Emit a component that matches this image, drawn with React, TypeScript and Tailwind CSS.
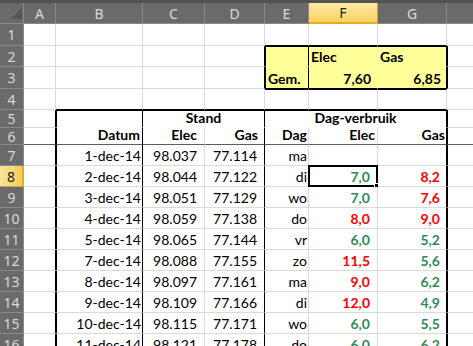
import React from 'react';

type Edge = 'g' | 'k' | 'n' | 'y' | 'f';
type Cell = {
  c: number;
  span?: number;
  text?: string;
  align?: 'l' | 'r' | 'c';
  bold?: boolean;
  color?: 'r' | 'g';
  pr?: number;
};

const LETTERS = ['A', 'B', 'C', 'D', 'E', 'F', 'G', ''];

const RIGHT: Record<Edge, string> = {
  g: 'border-r-[#dadada]',
  k: 'border-r-black',
  n: 'border-r-white',
  y: 'border-r-[#ffff99]',
  f: 'border-r-[#5e5e5e]',
};
const BOTTOM: Record<Edge, string> = {
  g: 'border-b-[#dadada]',
  k: 'border-b-black',
  n: 'border-b-white',
  y: 'border-b-[#ffff99]',
  f: 'border-b-[#5e5e5e]',
};
const PAD: Record<number, string> = {
  1: 'pr-[1px]',
  2: 'pr-[2px]',
  5: 'pr-[5px]',
  6: 'pr-[6px]',
  7: 'pr-[7px]',
};

// stand + dagverbruik, rows 7..16
const DATA: [string, string, string, string, string, string][] = [
  ['1-dec-14', '98.037', '77.114', 'ma', '', ''],
  ['2-dec-14', '98.044', '77.122', 'di', '7,0g', '8,2r'],
  ['3-dec-14', '98.051', '77.129', 'wo', '7,0g', '7,6r'],
  ['4-dec-14', '98.059', '77.138', 'do', '8,0r', '9,0r'],
  ['5-dec-14', '98.065', '77.144', 'vr', '6,0g', '5,2g'],
  ['7-dec-14', '98.088', '77.155', 'zo', '11,5r', '5,6g'],
  ['8-dec-14', '98.097', '77.161', 'ma', '9,0r', '6,2g'],
  ['9-dec-14', '98.109', '77.166', 'di', '12,0r', '4,9g'],
  ['10-dec-14', '98.115', '77.171', 'wo', '6,0g', '5,5g'],
  ['11-dec-14', '98.121', '77.178', 'do', '6,0g', '6,2g'],
];

const inBox = (r: number, c: number) => r >= 2 && r <= 3 && c >= 4 && c <= 6;
const inTbl = (r: number, c: number) => r >= 5 && c >= 1 && c <= 6;

function cellsFor(r: number): Cell[] {
  const blank = (cols: number[]) => cols.map((c) => ({ c }));
  if (r === 2)
    return [
      ...blank([0, 1, 2, 3, 4]),
      { c: 5, text: 'Elec', align: 'l', bold: true },
      { c: 6, text: 'Gas', align: 'l', bold: true },
      { c: 7 },
    ];
  if (r === 3)
    return [
      ...blank([0, 1, 2, 3]),
      { c: 4, text: 'Gem.', align: 'l', bold: true },
      { c: 5, text: '7,60', align: 'r', bold: true, pr: 6 },
      { c: 6, text: '6,85', align: 'r', bold: true, pr: 5 },
      { c: 7 },
    ];
  if (r === 5)
    return [
      { c: 0 },
      { c: 1 },
      { c: 2, span: 2, text: 'Stand', align: 'c', bold: true },
      { c: 4, span: 3, text: 'Dag-verbruik', align: 'c', bold: true },
      { c: 7 },
    ];
  if (r === 6)
    return [
      { c: 0 },
      { c: 1, text: 'Datum', align: 'r', bold: true, pr: 2 },
      { c: 2, text: 'Elec', align: 'r', bold: true, pr: 7 },
      { c: 3, text: 'Gas', align: 'r', bold: true, pr: 6 },
      { c: 4, text: 'Dag', align: 'r', bold: true, pr: 1 },
      { c: 5, text: 'Elec', align: 'r', bold: true, pr: 2 },
      { c: 6, text: 'Gas', align: 'r', bold: true, pr: 1 },
      { c: 7 },
    ];
  if (r >= 7) {
    const [d, e, g, dag, ve, vg] = DATA[r - 7];
    const val = (s: string, pr: number): Partial<Cell> =>
      s ? { text: s.slice(0, -1), color: s.slice(-1) as 'r' | 'g', bold: true, align: 'r', pr } : {};
    return [
      { c: 0 },
      { c: 1, text: d, align: 'r', pr: 1 },
      { c: 2, text: e, align: 'r', pr: 7 },
      { c: 3, text: g, align: 'r', pr: 7 },
      { c: 4, text: dag, align: 'r', pr: 1 },
      { c: 5, ...val(ve, 7) },
      { c: 6, ...val(vg, 6) },
      { c: 7 },
    ];
  }
  return blank([0, 1, 2, 3, 4, 5, 6, 7]);
}

function edges(r: number, c0: number, c1: number) {
  let right: Edge = 'g';
  if (inBox(r, c1) && inBox(r, c1 + 1)) right = c1 === 4 ? 'k' : 'y';
  else if (inBox(r, c1) !== inBox(r, c1 + 1)) right = 'k';
  else if (inTbl(r, c1) !== inTbl(r, c1 + 1)) right = 'k';
  else if (inTbl(r, c1)) right = c1 === 1 || c1 === 3 ? 'k' : r === 5 ? 'n' : 'g';

  let bottom: Edge = 'g';
  if (inBox(r, c0) && inBox(r + 1, c0)) bottom = 'y';
  else if (inBox(r, c0) !== inBox(r + 1, c0)) bottom = 'k';
  else if (inTbl(r, c0) !== inTbl(r + 1, c0)) bottom = 'k';
  else if (r === 6) bottom = 'f';
  else if (r === 5 && inTbl(r, c0)) bottom = 'n';

  const top = inBox(r, c0) !== inBox(r - 1, c0) || inTbl(r, c0) !== inTbl(r - 1, c0);
  const left = inBox(r, c0) !== inBox(r, c0 - 1) || inTbl(r, c0) !== inTbl(r, c0 - 1);
  return { right, bottom, top, left };
}

const SPAN: Record<number, string> = { 1: '', 2: 'col-span-2', 3: 'col-span-3' };

export default function App() {
  const rows = Array.from({ length: 16 }, (_, i) => i + 1);

  return (
    <div className="w-[473px] h-[346px] overflow-hidden bg-white font-['Lato',sans-serif] text-[14px] text-black">
      <div className="h-[3px] bg-[#525252]" />
      <div className="grid grid-cols-[24px_32px_87px_62px_60px_44px_69px_69px_40px] grid-rows-[21px_22px_21px_22px_21px_18px_17px_21px_21px_21px_21px_21px_21px_21px_21px_21px_21px]">
        {/* column headers */}
        <div className="relative bg-[#6a6a6a] border-r border-b border-r-[#8a8a8a] border-b-[#8a8a8a]">
          <svg width="24" height="21" className="absolute left-0 top-0">
            <polygon points="22,5 22,16 11,16" fill="#545454" />
          </svg>
        </div>
        {LETTERS.map((l, i) =>
          i === 5 ? (
            <div
              key={i}
              className="flex items-center justify-center bg-gradient-to-b from-[#fde9a6] to-[#f8d35e] border-r border-b-2 border-r-[#c9a24a] border-b-[#e3a92a] font-['Noto_Sans',sans-serif] text-[14px] text-[#222]"
            >
              {l}
            </div>
          ) : (
            <div
              key={i}
              className="flex items-center justify-center bg-[#6a6a6a] border-r border-b border-r-[#8a8a8a] border-b-[#8a8a8a] font-['Noto_Sans',sans-serif] text-[14px] text-[#d9d9d9]"
            >
              {l}
            </div>
          )
        )}

        {rows.map((r) => (
          <React.Fragment key={r}>
            <div
              className={
                r === 8
                  ? "flex items-center justify-center bg-gradient-to-r from-[#fbe39a] to-[#f6cf58] border-r-2 border-b border-r-[#e3a92a] border-b-[#c9a24a] font-['Noto_Sans',sans-serif] text-[14px] text-[#222]"
                  : "flex items-center justify-center bg-[#6a6a6a] border-r border-b border-r-[#8a8a8a] border-b-[#8a8a8a] font-['Noto_Sans',sans-serif] text-[14px] text-[#d9d9d9]"
              }
            >
              {r}
            </div>
            {cellsFor(r).map((cell) => {
              const span = cell.span ?? 1;
              const e = edges(r, cell.c, cell.c + span - 1);
              const selected = r === 8 && cell.c === 5;
              const cls = [
                'relative flex items-end pb-[1px] pl-[2px] leading-[17px] whitespace-nowrap border-r border-b',
                RIGHT[e.right],
                BOTTOM[e.bottom],
                e.top ? 'border-t border-t-black' : '',
                e.left ? 'border-l border-l-black' : '',
                inBox(r, cell.c) ? 'bg-[#ffff99]' : 'bg-white',
                SPAN[span],
                cell.align === 'r' ? 'justify-end' : cell.align === 'c' ? 'justify-center' : 'justify-start',
                cell.pr ? PAD[cell.pr] : 'pr-[2px]',
                cell.bold ? 'font-bold' : '',
                cell.color === 'r' ? 'text-[#ff0000]' : cell.color === 'g' ? 'text-[#2f8a57]' : '',
              ].join(' ');
              return (
                <div key={cell.c} className={cls}>
                  {cell.text}
                  {selected && (
                    <div className="absolute -left-[1px] -top-[1px] -right-[1px] -bottom-[1px] border-2 border-black">
                      <div className="absolute -right-[4px] -bottom-[4px] w-[6px] h-[6px] bg-black border border-white" />
                    </div>
                  )}
                </div>
              );
            })}
          </React.Fragment>
        ))}
      </div>
    </div>
  );
}
